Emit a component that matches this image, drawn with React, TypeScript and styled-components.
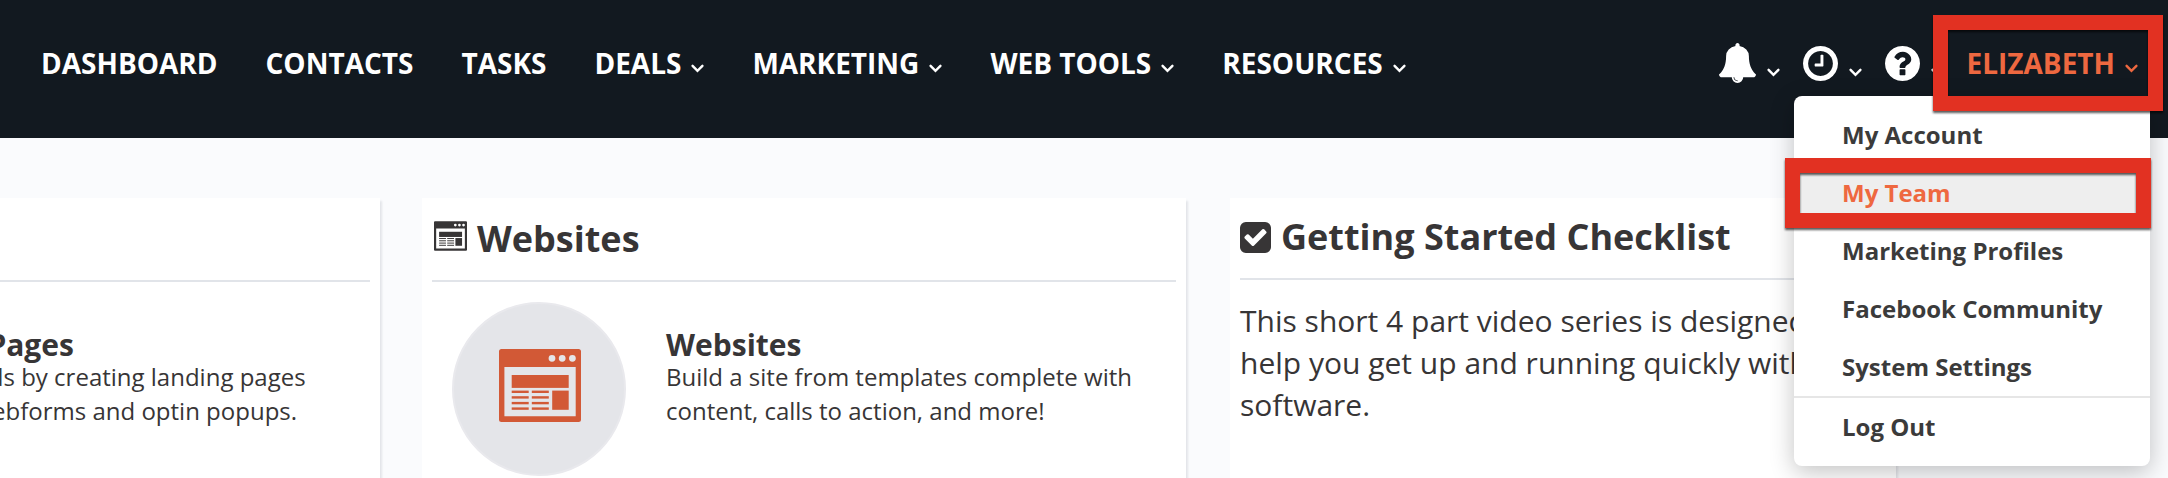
import React from "react";
import styled, { createGlobalStyle, css } from "styled-components";

const ink = "#373536";
const accent = "#ee6840";

const GlobalStyle = createGlobalStyle`
  *, *::before, *::after { box-sizing: border-box; }
  body {
    margin: 0;
    background: #fafbfd;
    color: ${ink};
    font-family: "Open Sans", "Noto Sans", sans-serif;
  }
  h2, h3, p, ul { margin: 0; padding: 0; }
  button { border: 0; background: none; padding: 0; cursor: pointer; font: inherit; color: inherit; }
`;

const Page = styled.div`
  height: 100vh;
  overflow: hidden;
`;

const Header = styled.header`
  display: flex;
  justify-content: space-between;
  padding: 43px 30px 55px 41px;
  background: #121920;
  color: #fff;
`;

const NavList = styled.nav`
  display: flex;
  gap: 48px;
`;

const navText = css`
  display: flex;
  align-items: center;
  gap: 10px;
  height: 40px;
  font-size: 28px;
  font-weight: 700;
  line-height: 40px;
  white-space: nowrap;
  text-transform: uppercase;
`;

const NavLink = styled.a`
  ${navText}
  color: #fff;
  text-decoration: none;
`;

const NavButton = styled.button`
  && {
    ${navText}
  }
`;

const Tools = styled.div`
  display: flex;
  gap: 23px;
`;

const IconButton = styled.button`
  display: flex;
  align-items: center;
  gap: 11px;
  height: 40px;
`;

const ChevronSvg = styled.svg<{ $low?: boolean }>`
  flex: none;
  width: 13px;
  height: 9px;
  margin-top: ${(p) => (p.$low ? 18 : 10)}px;
`;

const callout = css`
  content: "";
  position: absolute;
  border: 15px solid #e23122;
  filter: drop-shadow(0 2px 1px rgba(0, 0, 0, 0.65));
  pointer-events: none;
`;

const UserMenu = styled.div`
  position: relative;
  z-index: 2;

  &::after {
    ${callout}
    inset: -28px -25px -28px -34px;
  }
`;

const UserButton = styled.button`
  && {
    ${navText}
    color: ${accent};
  }
`;

const Menu = styled.ul`
  position: absolute;
  top: 53px;
  right: -12px;
  width: 356px;
  padding: 10px 0;
  border-radius: 8px;
  background: #fff;
  box-shadow: 0 6px 24px rgba(0, 0, 0, 0.24);
  list-style: none;
`;

const MenuItem = styled.li<{ $active?: boolean; $divided?: boolean }>`
  position: relative;
  border-top: ${(p) => (p.$divided ? "2px solid #e6e6e6" : "0")};
  background: ${(p) => (p.$active ? "#eee" : "transparent")};
  color: ${(p) => (p.$active ? accent : "#3b3b3b")};

  ${(p) =>
    p.$active &&
    css`
      &::after {
        ${callout}
        inset: -6px -1px -6px -9px;
      }
    `}
`;

const MenuLink = styled.a`
  display: block;
  padding-left: 48px;
  color: inherit;
  font-size: 24px;
  font-weight: 700;
  line-height: 58px;
  text-decoration: none;
`;

/* The dashboard is scrolled sideways, so its first card starts off screen. */
const Board = styled.main`
  display: grid;
  grid-template-columns: minmax(0, 1570fr) minmax(0, 666fr);
  gap: 44px;
  margin: 60px 272px 0 -384px;
`;

const CardPair = styled.div`
  display: grid;
  grid-template-columns: 1fr 1fr;
  gap: 42px;
`;

const Card = styled.section`
  min-height: 100vh;
  padding: 0 10px;
  background: #fff;
  box-shadow: 2px 3px 2px rgba(30, 40, 60, 0.1);
`;

const CardHeading = styled.div<{ $compact?: boolean }>`
  display: flex;
  align-items: center;
  gap: 10px;
  padding: ${(p) => (p.$compact ? "14px 0 16px" : "16px 2px")};
  border-bottom: 2px solid #e1e4e9;
`;

const CardTitle = styled.h2`
  font-size: 36px;
  font-weight: 700;
  line-height: 50px;
`;

const Feature = styled.div`
  display: flex;
  gap: 40px;
  padding: 20px;
`;

const Disc = styled.div`
  display: grid;
  flex: none;
  place-items: center;
  width: 174px;
  height: 174px;
  padding: 0 0 8px 2px;
  border: 2px solid #e9e9ed;
  border-radius: 50%;
  background: #e4e5e9;
  color: #d25936;
`;

const FeatureText = styled.div`
  padding-top: 28px;
`;

const FeatureTitle = styled.h3`
  font-size: 30px;
  font-weight: 700;
  line-height: 30px;
`;

const FeatureBody = styled.p`
  font-size: 24px;
  line-height: 34px;
  white-space: nowrap;
`;

const Intro = styled.p`
  padding-top: 20px;
  font-size: 30px;
  line-height: 42px;
`;

const HeadingIcon = styled.span`
  display: flex;
  margin-bottom: 6px;
`;

function Chevron({ low }: { low?: boolean }) {
  return (
    <ChevronSvg $low={low} viewBox="0 0 13 9" aria-hidden="true">
      <path
        d="M1.6 1.8 L6.5 6.8 L11.4 1.8"
        fill="none"
        stroke="currentColor"
        strokeWidth="2.4"
        strokeLinecap="round"
      />
    </ChevronSvg>
  );
}

function Glyph({ d, box, width, height }: { d: string; box: string; width: number; height: number }) {
  return (
    <svg width={width} height={height} viewBox={box} fill="currentColor" aria-hidden="true">
      <path d={d} />
    </svg>
  );
}

const bell =
  "M912 1696q0-16-16-16-59 0-101.5-42.5t-42.5-101.5q0-16-16-16t-16 16q0 73 51.5 124.5t124.5 51.5q16 0 16-16zm816-288q0 52-38 90t-90 38h-448q0 106-75 181t-181 75-181-75-75-181h-448q-52 0-90-38t-38-90q50-42 91-88t85-119.5 74.5-158.5 50-206 19.5-260q0-152 117-282.5t307-158.5q-8-19-8-39 0-40 28-68t68-28 68 28 28 68q0 20-8 39 190 28 307 158.5t117 282.5q0 139 19.5 260t50 206 74.5 158.5 85 119.5 91 88z";
const clock =
  "M1024 544v448q0 14-9 23t-23 9h-320q-14 0-23-9t-9-23v-64q0-14 9-23t23-9h224v-352q0-14 9-23t23-9h64q14 0 23 9t9 23zm416 352q0-148-73-273t-198-198-273-73-273 73-198 198-73 273 73 273 198 198 273 73 273-73 198-198 73-273zm224 0q0 209-103 385.5t-279.5 279.5-385.5 103-385.5-103-279.5-279.5-103-385.5 103-385.5 279.5-279.5 385.5-103 385.5 103 279.5 279.5 103 385.5z";
const question =
  "M1024 1376v-192q0-14-9-23t-23-9h-192q-14 0-23 9t-9 23v192q0 14 9 23t23 9h192q14 0 23-9t9-23zm256-672q0-88-55.5-163t-138.5-116-170-41q-243 0-371 213-15 24 8 42l132 100q7 6 19 6 16 0 25-12 53-68 86-92 34-24 86-24 48 0 85.5 26t37.5 59q0 38-20 61t-68 45q-63 28-115.5 86.5t-52.5 125.5v36q0 14 9 23t23 9h192q14 0 23-9t9-23q0-19 21.5-49.5t54.5-49.5q32-18 49-28.5t46-35 44.5-48 28-60.5 12.5-81zm384 192q0 209-103 385.5t-279.5 279.5-385.5 103-385.5-103-279.5-279.5-103-385.5 103-385.5 279.5-279.5 385.5-103 385.5 103 279.5 279.5 103 385.5z";
const checkSquare =
  "M813 1299l614-614q19-19 19-45t-19-45l-102-102q-19-19-45-19t-45 19l-467 467-211-211q-19-19-45-19t-45 19l-102 102q-19 19-19 45t19 45l358 358q19 19 45 19t45-19zm851-883v960q0 119-84.5 203.5t-203.5 84.5h-960q-119 0-203.5-84.5t-84.5-203.5v-960q0-119 84.5-203.5t203.5-84.5h960q119 0 203.5 84.5t84.5 203.5z";

function BrowserIcon({ width, height }: { width: number; height: number }) {
  const lines = [41.6, 47.2, 52.9, 58.4];
  return (
    <svg width={width} height={height} viewBox="0 0 82 73" fill="currentColor" aria-hidden="true">
      <path
        fillRule="evenodd"
        d="M2.5 0H79.5Q82 0 82 2.5V70.5Q82 73 79.5 73H2.5Q0 73 0 70.5V2.5Q0 0 2.5 0Z
           M5.4 18V67.3H76.7V18Z
           M49.6 9.3a3.4 3.4 0 1 0 6.8 0a3.4 3.4 0 1 0-6.8 0Z
           M59.8 9.3a3.4 3.4 0 1 0 6.8 0a3.4 3.4 0 1 0-6.8 0Z
           M70 9.3a3.4 3.4 0 1 0 6.8 0a3.4 3.4 0 1 0-6.8 0Z"
      />
      <rect x="12.7" y="26" width="57" height="12.9" />
      <rect x="53.2" y="41.6" width="16.5" height="19.2" />
      {lines.map((y) => (
        <React.Fragment key={y}>
          <rect x="12.7" y={y} width="17" height="2.4" />
          <rect x="32.8" y={y} width="17" height="2.4" />
        </React.Fragment>
      ))}
    </svg>
  );
}

const navItems = [
  { label: "Dashboard" },
  { label: "Contacts" },
  { label: "Tasks" },
  { label: "Deals", menu: true },
  { label: "Marketing", menu: true },
  { label: "Web Tools", menu: true },
  { label: "Resources", menu: true },
];

const menuItems = [
  { label: "My Account" },
  { label: "My Team", active: true },
  { label: "Marketing Profiles" },
  { label: "Facebook Community" },
  { label: "System Settings" },
  { label: "Log Out", divided: true },
];

export default function App() {
  return (
    <Page>
      <GlobalStyle />
      <Header>
        <NavList aria-label="Main">
          {navItems.map((item) =>
            item.menu ? (
              <NavButton key={item.label} type="button">
                {item.label}
                <Chevron />
              </NavButton>
            ) : (
              <NavLink key={item.label} href="#">
                {item.label}
              </NavLink>
            )
          )}
        </NavList>
        <Tools>
          <IconButton type="button" aria-label="Notifications">
            <Glyph d={bell} box="64 0 1664 1792" width={37} height={40} />
            <Chevron low />
          </IconButton>
          <IconButton type="button" aria-label="Recent">
            <Glyph d={clock} box="128 128 1536 1536" width={35} height={35} />
            <Chevron low />
          </IconButton>
          <IconButton type="button" aria-label="Help">
            <Glyph d={question} box="128 128 1536 1536" width={35} height={35} />
            <Chevron low />
          </IconButton>
          <UserMenu>
            <UserButton type="button" aria-expanded="true">
              Elizabeth
              <Chevron />
            </UserButton>
            <Menu>
              {menuItems.map((item) => (
                <MenuItem key={item.label} $active={item.active} $divided={item.divided}>
                  <MenuLink href="#">{item.label}</MenuLink>
                </MenuItem>
              ))}
            </Menu>
          </UserMenu>
        </Tools>
      </Header>
      <Board>
        <CardPair>
          <Card>
            <CardHeading>
              <HeadingIcon>
                <BrowserIcon width={33} height={30} />
              </HeadingIcon>
              <CardTitle>Landing Pages</CardTitle>
            </CardHeading>
            <Feature>
              <Disc>
                <BrowserIcon width={82} height={73} />
              </Disc>
              <FeatureText>
                <FeatureTitle>Landing Pages</FeatureTitle>
                <FeatureBody>
                  Capture leads by creating landing pages
                  <br />
                  alongside webforms and optin popups.
                </FeatureBody>
              </FeatureText>
            </Feature>
          </Card>
          <Card>
            <CardHeading>
              <HeadingIcon>
                <BrowserIcon width={33} height={30} />
              </HeadingIcon>
              <CardTitle>Websites</CardTitle>
            </CardHeading>
            <Feature>
              <Disc>
                <BrowserIcon width={82} height={73} />
              </Disc>
              <FeatureText>
                <FeatureTitle>Websites</FeatureTitle>
                <FeatureBody>
                  Build a site from templates complete with
                  <br />
                  content, calls to action, and more!
                </FeatureBody>
              </FeatureText>
            </Feature>
          </Card>
        </CardPair>
        <Card>
          <CardHeading $compact>
            <Glyph d={checkSquare} box="128 128 1536 1536" width={31} height={31} />
            <CardTitle>Getting Started Checklist</CardTitle>
          </CardHeading>
          <Intro>
            This short 4 part video series is designed to
            <br />
            help you get up and running quickly with our
            <br />
            software.
          </Intro>
        </Card>
      </Board>
    </Page>
  );
}
